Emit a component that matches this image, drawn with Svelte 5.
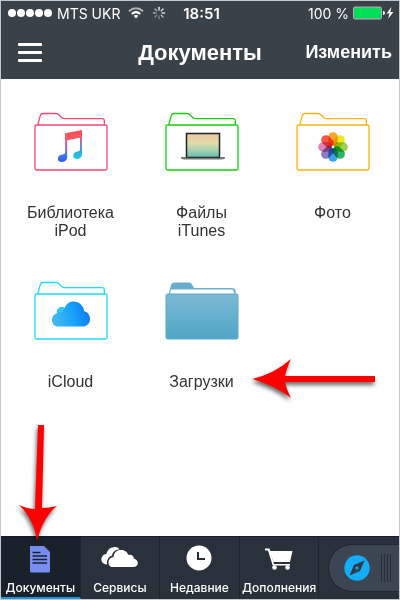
<script>
    const folders = [
        { id: "ipod", name: "Библиотека iPod", color: "#f5476f" },
        { id: "itunes", name: "Файлы iTunes", color: "#14cf0a" },
        { id: "photo", name: "Фото", color: "#ffb30f" },
        { id: "icloud", name: "iCloud", color: "#1cdcf8" },
        { id: "downloads", name: "Загрузки", color: "#5aa9c8" },
    ];

    const tabs = [
        { id: "documents", name: "Документы" },
        { id: "services", name: "Сервисы" },
        { id: "recent", name: "Недавние" },
        { id: "addons", name: "Дополнения" },
    ];

    // Цвета лепестков по часовой стрелке
    const petals = ["#fba52e", "#ece81a", "#9bcf4f", "#2bb368", "#3fa4e4", "#8b7cc6", "#e083b6", "#f4564a"];

    // Лучи индикатора загрузки
    const rays = [1, 0.9, 0.8, 0.7, 0.35, 0.4, 0.5, 0.6];

    let activeTab = "documents";

    const selectTab = (id) => {
        activeTab = id;
    };
</script>

<div class="screen">
    <header class="header">
        <div class="status">
            <div class="status-left">
                <span class="dots">
                    {#each [1, 2, 3, 4, 5] as dot (dot)}
                        <i class="dot"></i>
                    {/each}
                </span>
                <span>MTS UKR</span>
                <svg class="wifi" width="16" height="12" viewBox="0 0 16 12" fill="none" stroke="#fff" stroke-width="2">
                    <path d="M1 4.2C5 .4 11 .4 15 4.2" stroke="#a9afb5" />
                    <path d="M3.7 7C6.3 4.7 9.7 4.7 12.3 7" />
                    <path d="M5.6 8.8C7 7.6 9 7.6 10.4 8.8L8 11.4z" fill="#fff" stroke="none" />
                </svg>
                <svg width="14" height="14" viewBox="-7 -7 14 14" stroke="#fff" stroke-width="1.3" stroke-linecap="round">
                    {#each rays as opacity, i}
                        <path d="M0-3V-5.7" {opacity} transform="rotate({i * 45})" />
                    {/each}
                </svg>
            </div>
            <span class="time">18:51</span>
            <div class="status-right">
                <span>100 %</span>
                <svg width="42" height="14" viewBox="0 0 42 14">
                    <rect x=".5" y="1" width="28" height="12" rx="1.5" fill="#00df57" stroke="#c9a5c5" />
                    <path d="M30 5q2 0 2 2t-2 2z" fill="#fff" />
                    <path d="M38.5 1L33.5 7.6H36.4L35.2 12.8L40.4 6H37.3z" fill="#fff" />
                </svg>
            </div>
        </div>
        <div class="toolbar">
            <button class="menu-button" aria-label="Меню">
                <i></i><i></i><i></i>
            </button>
            <h1 class="title">Документы</h1>
            <button class="edit-button">Изменить</button>
        </div>
    </header>

    <main class="folders">
        {#each folders as folder (folder.id)}
            <button class="folder">
                <svg width="74" height="60" viewBox="0 0 74 60" fill="none">
                    <defs>
                        <linearGradient id="note" x1="0" y1="0" x2="0" y2="1">
                            <stop offset="0" stop-color="#fb4b55" />
                            <stop offset=".3" stop-color="#e45a88" />
                            <stop offset=".55" stop-color="#8c62d8" />
                            <stop offset=".75" stop-color="#3f79f0" />
                            <stop offset="1" stop-color="#3458e8" />
                        </linearGradient>
                        <linearGradient id="note-right" x1="0" y1="0" x2="0" y2="1">
                            <stop offset="0" stop-color="#fb5050" />
                            <stop offset=".35" stop-color="#c26bb0" />
                            <stop offset=".7" stop-color="#2fa9e8" />
                            <stop offset="1" stop-color="#20c6dc" />
                        </linearGradient>
                        <linearGradient id="beam" x1="0" y1="0" x2="0" y2="1">
                            <stop offset="0" stop-color="#fb4b50" />
                            <stop offset="1" stop-color="#f0606e" />
                        </linearGradient>
                        <linearGradient id="display" x1="0" y1="0" x2="0" y2="1">
                            <stop offset="0" stop-color="#efc7a0" />
                            <stop offset=".4" stop-color="#e0dcab" />
                            <stop offset=".75" stop-color="#9ad0b4" />
                            <stop offset="1" stop-color="#5eb9b0" />
                        </linearGradient>
                        <linearGradient id="cloud" x1="0" y1=".5" x2="1" y2=".3">
                            <stop offset="0" stop-color="#44b9ef" />
                            <stop offset=".5" stop-color="#19a4fa" />
                            <stop offset="1" stop-color="#0876f5" />
                        </linearGradient>
                        <linearGradient id="blue-folder" x1="0" y1="0" x2="0" y2="1">
                            <stop offset="0" stop-color="#7db9d5" />
                            <stop offset="1" stop-color="#4fa6c6" />
                        </linearGradient>
                    </defs>
                    {#if folder.id === "downloads"}
                        <path d="M3.5 14L6 4Q6.7 1.5 9 1.5H24Q26 1.5 27 3.5L29 7H67Q70 7 70.5 9.5V15H3.5z" fill="#69adcb" />
                        <path d="M5 12.5L6 8.5H68L69.5 13.5H5z" fill="#fff" />
                        <rect x="1" y="13" width="72" height="45" rx="1.5" fill="url(#blue-folder)" stroke="#5ba9c8" />
                    {:else}
                        <g stroke={folder.color} stroke-width="1.3">
                            <path d="M3.7 13L6.3 3.5Q7 1.5 9 1.5H21.5Q24 1.5 25.5 3.2L28 5.7Q29 6.6 31 6.6H68Q70.3 6.6 70.3 8.6V13" />
                            <rect x="1" y="13" width="72" height="45" rx="1.5" />
                        </g>
                    {/if}
                    {#if folder.id === "ipod"}
                        <path d="M31.2 21.3L33.2 20.9V45Q33 49.6 28.3 49.9Q23.9 49.9 23.9 46.7Q23.9 43 28.5 42.5Q30.8 42.4 31.2 41z" fill="url(#note)" />
                        <path d="M46 18.5L47 18.3Q48 18.2 48 19.1V42.2Q47.7 46.6 43.3 46.9Q39.3 46.9 39.3 43.7Q39.3 40.3 43.5 39.5Q45.8 39.3 46 37.7z" fill="url(#note-right)" />
                        <path d="M31.2 21.3L47 18.3Q48 18.2 48 19.1V25.2L31.2 28.7z" fill="url(#beam)" />
                    {:else if folder.id === "itunes"}
                        <rect x="21.5" y="21.5" width="33" height="24" fill="url(#display)" stroke="#222" stroke-width="1.5" />
                        <path d="M16 45H60V46.5Q58 47.5 56 47.5H20Q17 47.5 16 46.5z" fill="#777" />
                        <path d="M21 45H55V46H21z" fill="#333" />
                    {:else if folder.id === "photo"}
                        <g class="petals" transform="translate(37 35)">
                            {#each petals as petal, i}
                                <rect x="-4.7" y="-14.8" width="9.4" height="13.8" rx="4.7" fill={petal} transform="rotate({i * 45})" />
                            {/each}
                        </g>
                    {:else if folder.id === "icloud"}
                        <path d="M24 45.5C20.5 45.5 18 42.5 18 39.2C18 35.5 20.2 33 23 32.2C22 27.5 27 24.5 30.5 27C32.5 22.5 36 20.5 39.5 20.5C45 20.5 49.5 24.5 50.2 30.2C53 30.7 56 33.5 56 37.7C56 42.3 53 45.5 48.5 45.5z" fill="url(#cloud)" />
                        <path d="M23 32.5C22 27.5 27 24.5 30.5 27.2C29.5 28.5 29 30 28.8 31.3C26.5 31 24.5 31.5 23 32.5z" fill="#35d2f2" opacity=".7" />
                    {/if}
                </svg>
                <span class="folder-name">{folder.name}</span>
                {#if folder.id === "downloads"}
                    <svg class="arrow arrow-left" width="128" height="50" viewBox="0 0 128 50" fill="red">
                        <path d="M2 24Q24 19 41 4Q36 15 35 21H125V27H35Q36 33 41 43Q24 30 2 24z" />
                    </svg>
                {/if}
            </button>
        {/each}
    </main>

    <nav class="tabbar">
        {#each tabs as tab (tab.id)}
            <button class="tab" class:active={activeTab === tab.id} on:click={() => selectTab(tab.id)}>
                <svg width="40" height="32" viewBox="0 0 40 32" fill="#fff">
                    {#if tab.id === "documents"}
                        <path d="M10 3H24L30 9V28Q30 29.5 28.5 29.5H11.5Q10 29.5 10 28z" fill="#788df0" />
                        <path d="M12.5 9.5H20.5M12.5 13H27M12.5 16.5H27M12.5 20H27" stroke="#18202e" stroke-width="1.3" />
                    {:else if tab.id === "services"}
                        <path d="M7 21.5C2.5 21 .5 18 1.7 14.5C2.5 12 4.5 11 6.5 11C7.5 7 9.7 4.5 13 4.5C15 3.5 18 4 19.5 6.5C15.5 6.5 12.5 9 12 12.5C8.5 13.5 6.7 17 7 21.5z" />
                        <path d="M12.5 24C9.5 24 8.3 21.5 8.5 19C8.7 16.3 10.8 14.3 13.5 14C14 8.5 18 6.5 21.5 7C25 7 27.3 9.5 28.5 12C31.5 11 34 13.5 34 15.5C37 16.5 38 18.5 37.8 20.5C37.5 22.7 36 24 33.5 24z" />
                    {:else if tab.id === "recent"}
                        <circle cx="20" cy="15" r="12.5" />
                        <path d="M19 9V16H26" fill="none" stroke="#252e37" stroke-width="2" />
                    {:else}
                        <path d="M6 5.5H10.500L15 21H31V22.5H13.7L9 7.5H6z" />
                        <path d="M10.5 8H33.5L31 19H14.5z" />
                        <circle cx="15.5" cy="24.5" r="2.3" />
                        <circle cx="28.5" cy="24.5" r="2.3" />
                    {/if}
                </svg>
                <span>{tab.name}</span>
            </button>
        {/each}
        <div class="browser-cell">
            <button class="browser" aria-label="Браузер">
                <svg width="26" height="26" viewBox="0 0 26 26">
                    <circle cx="13" cy="13" r="12.7" fill="#13adfa" />
                    <path d="M20.5 5.5L16 16L5.5 20.5L10 10z" fill="#323c49" />
                    <circle cx="13" cy="13" r="1.5" fill="#13adfa" />
                </svg>
                <svg width="10" height="28" viewBox="0 0 10 28" stroke="#252e38">
                    <path d="M.5 0V28M3.5 0V28M6.5 0V28M9.5 0V28" />
                </svg>
            </button>
        </div>
        <svg class="arrow arrow-down" width="46" height="124" viewBox="0 0 46 124" fill="red">
            <path d="M23 4H29L27 87Q34 87 42 85Q28 96 22 120Q19 98 4 84Q13 88 20 88z" />
        </svg>
    </nav>
</div>

<style>
    :global(body) {
        background-color: #fff;
    }

    .screen {
        display: flex;
        flex-direction: column;
        min-height: 100vh;
        box-sizing: border-box;
        border: 1px solid #c4c8ca;
        font-family: Inter, "Liberation Sans", sans-serif;
        color: #333;
    }

    button {
        padding: 0;
        border: none;
        background: none;
        color: inherit;
        font: inherit;
        cursor: pointer;
    }

    svg {
        display: block;
        flex-shrink: 0;
    }

    .header {
        padding-bottom: 4px;
        background-color: #394149;
        color: #fff;
    }

    .status {
        display: grid;
        grid-template-columns: 1fr auto 1fr;
        align-items: center;
        height: 24px;
        padding: 0 4px 0 7px;
        font-size: 14px;
    }

    .status-left,
    .status-right {
        display: flex;
        align-items: center;
        gap: 5px;
        white-space: nowrap;
    }

    .status-left .wifi {
        margin: 0 3px;
    }

    .status-right {
        justify-content: flex-end;
        gap: 4px;
    }

    .dots {
        display: flex;
        gap: 1px;
    }

    .dot {
        width: 8px;
        height: 8px;
        border-radius: 50%;
        background-color: #fff;
    }

    .time {
        font-size: 15px;
        font-weight: 600;
    }

    .toolbar {
        display: grid;
        grid-template-columns: 1fr auto 1fr;
        align-items: center;
        height: 50px;
        padding: 5px 7px 0;
        box-sizing: border-box;
        font-family: "Liberation Sans", Arial, sans-serif;
        font-weight: bold;
    }

    .menu-button {
        display: flex;
        flex-direction: column;
        gap: 5px;
        width: 24px;
        margin-left: 10px;
    }

    .menu-button i {
        height: 3px;
        border-radius: 1px;
        background-color: #fff;
    }

    .title {
        margin: 0;
        font-size: 22px;
        line-height: 24px;
    }

    .edit-button {
        justify-self: end;
        font-size: 18px;
    }

    .folders {
        flex: 1;
        display: grid;
        grid-template-columns: repeat(3, 1fr);
        grid-auto-rows: 169px;
        align-content: start;
        padding: 33px 1px 0 4px;
    }

    .folder {
        position: relative;
        display: flex;
        flex-direction: column;
        align-items: center;
        gap: 32px;
    }

    .folder-name {
        width: min-content;
        font-family: "Liberation Sans", Arial, sans-serif;
        font-size: 16px;
        line-height: 18px;
    }

    .petals {
        isolation: isolate;
    }

    .petals rect {
        mix-blend-mode: multiply;
    }

    .arrow {
        position: absolute;
        z-index: 1;
        filter: drop-shadow(-1px 3px 2px rgba(0, 0, 0, 0.6));
        pointer-events: none;
    }

    .arrow-left {
        top: 74px;
        left: 114px;
    }

    .arrow-down {
        bottom: 54px;
        left: 14px;
    }

    .tabbar {
        position: relative;
        display: grid;
        grid-template-columns: repeat(5, 1fr);
        height: 63px;
        background-color: #29323b;
        color: #fff;
        font-size: 12px;
        font-weight: 500;
    }

    .tab {
        display: flex;
        flex-direction: column;
        align-items: center;
        gap: 5px;
        min-width: 0;
        padding-top: 6px;
        border-top: 1px solid #141c26;
        border-right: 1px solid #1d252e;
        border-bottom: 2px solid #29323b;
        white-space: nowrap;
    }

    .tab.active {
        background-color: #19212b;
        border-bottom-color: #1696e8;
    }

    .browser-cell {
        display: flex;
        align-items: center;
        padding-left: 9px;
        border-top: 1px solid #141c26;
    }

    .browser {
        flex: 1;
        display: flex;
        align-items: center;
        justify-content: space-between;
        height: 48px;
        padding: 0 8px 0 15px;
        box-sizing: border-box;
        border: 1px solid #1f2731;
        border-right: none;
        border-radius: 24px 0 0 24px;
        background-color: #3b4553;
    }
</style>
